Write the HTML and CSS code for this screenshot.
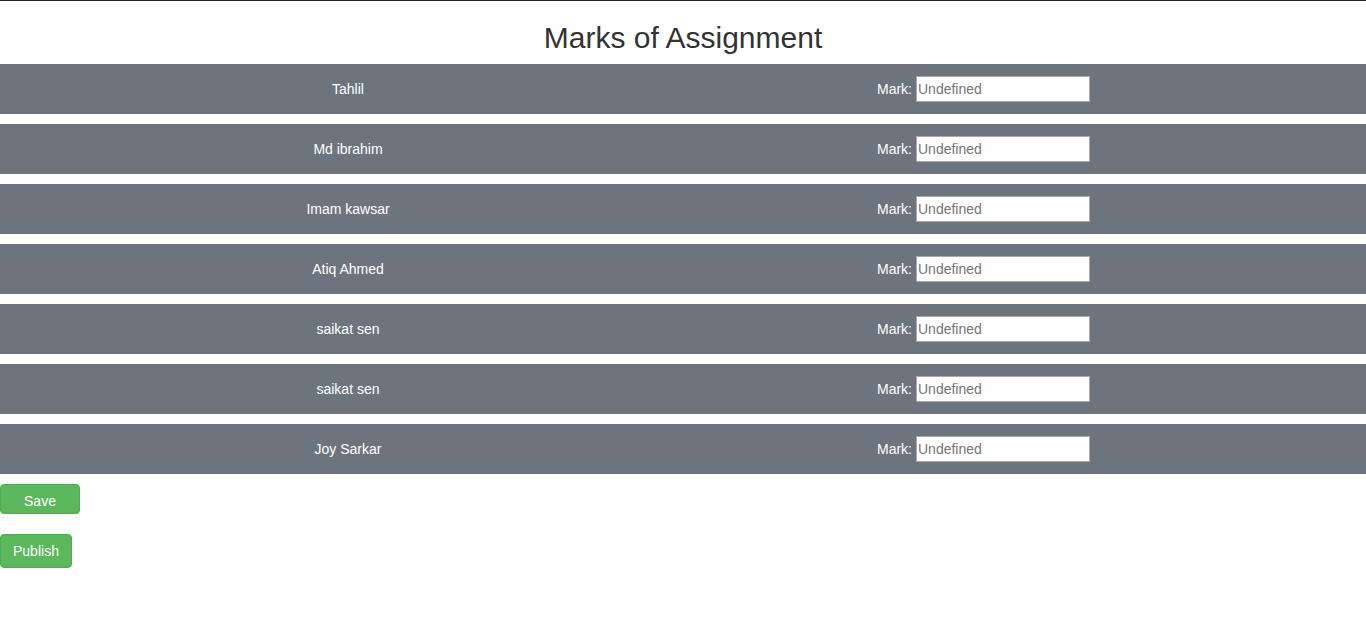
FILE: index.html
```html
<!DOCTYPE html>
<html>
<head>
<meta charset="utf-8">
<link rel="stylesheet" href="styles.css">
</head>
<body>
<div class="page">
  <h1 class="title">Marks of Assignment</h1>
  <div class="list">
    <div class="row"><div class="name">Tahlil</div><div class="mark"><label>Mark:</label><input type="text" placeholder="Undefined"></div></div>
    <div class="row"><div class="name">Md ibrahim</div><div class="mark"><label>Mark:</label><input type="text" placeholder="Undefined"></div></div>
    <div class="row"><div class="name">Imam kawsar</div><div class="mark"><label>Mark:</label><input type="text" placeholder="Undefined"></div></div>
    <div class="row"><div class="name">Atiq Ahmed</div><div class="mark"><label>Mark:</label><input type="text" placeholder="Undefined"></div></div>
    <div class="row"><div class="name">saikat sen</div><div class="mark"><label>Mark:</label><input type="text" placeholder="Undefined"></div></div>
    <div class="row"><div class="name">saikat sen</div><div class="mark"><label>Mark:</label><input type="text" placeholder="Undefined"></div></div>
    <div class="row"><div class="name">Joy Sarkar</div><div class="mark"><label>Mark:</label><input type="text" placeholder="Undefined"></div></div>
  </div>
  <div class="actions">
    <button class="btn btn-save">Save</button>
    <button class="btn btn-publish">Publish</button>
  </div>
</div>
</body>
</html>
```
FILE: styles.css
```css
html, body {
  margin: 0;
  padding: 0;
  background: #fff;
}
body {
  font-family: "Liberation Sans", Arial, sans-serif;
  font-size: 14px;
  color: #333;
}
.page {
  border-top: 1px solid #222;
}
.title {
  margin: 0;
  height: 63px;
  box-sizing: border-box;
  padding-top: 19px;
  font-size: 30px;
  font-weight: 400;
  line-height: 36px;
  text-align: center;
  color: #333;
}
.list {
  display: flex;
  flex-direction: column;
  gap: 10px;
}
.row {
  display: grid;
  grid-template-columns: 696px 1fr;
  height: 50px;
  align-items: center;
  background: #6c757d;
  color: #fff;
}
.name {
  text-align: center;
}
.mark {
  display: flex;
  align-items: center;
  padding-left: 181px;
}
.mark label {
  margin-right: 4px;
}
.mark input {
  width: 174px;
  height: 26px;
  box-sizing: border-box;
  border: 1px solid #a9a9a9;
  padding: 0 1px;
  font-family: "Liberation Sans", Arial, sans-serif;
  font-size: 14px;
  color: #333;
  outline: none;
}
.mark input::placeholder {
  color: #757575;
}
.actions {
  display: flex;
  flex-direction: column;
  align-items: flex-start;
  padding-top: 10px;
  gap: 20px;
}
.btn {
  font-family: "Liberation Sans", Arial, sans-serif;
  font-size: 14px;
  color: #fff;
  background: #5cb85c;
  border: 1px solid #4cae4c;
  border-radius: 4px;
  cursor: pointer;
}
.btn-save {
  width: 80px;
  height: 30px;
  padding: 3px 0 0;
}
.btn-publish {
  height: 34px;
  padding: 0 12px;
}
```
